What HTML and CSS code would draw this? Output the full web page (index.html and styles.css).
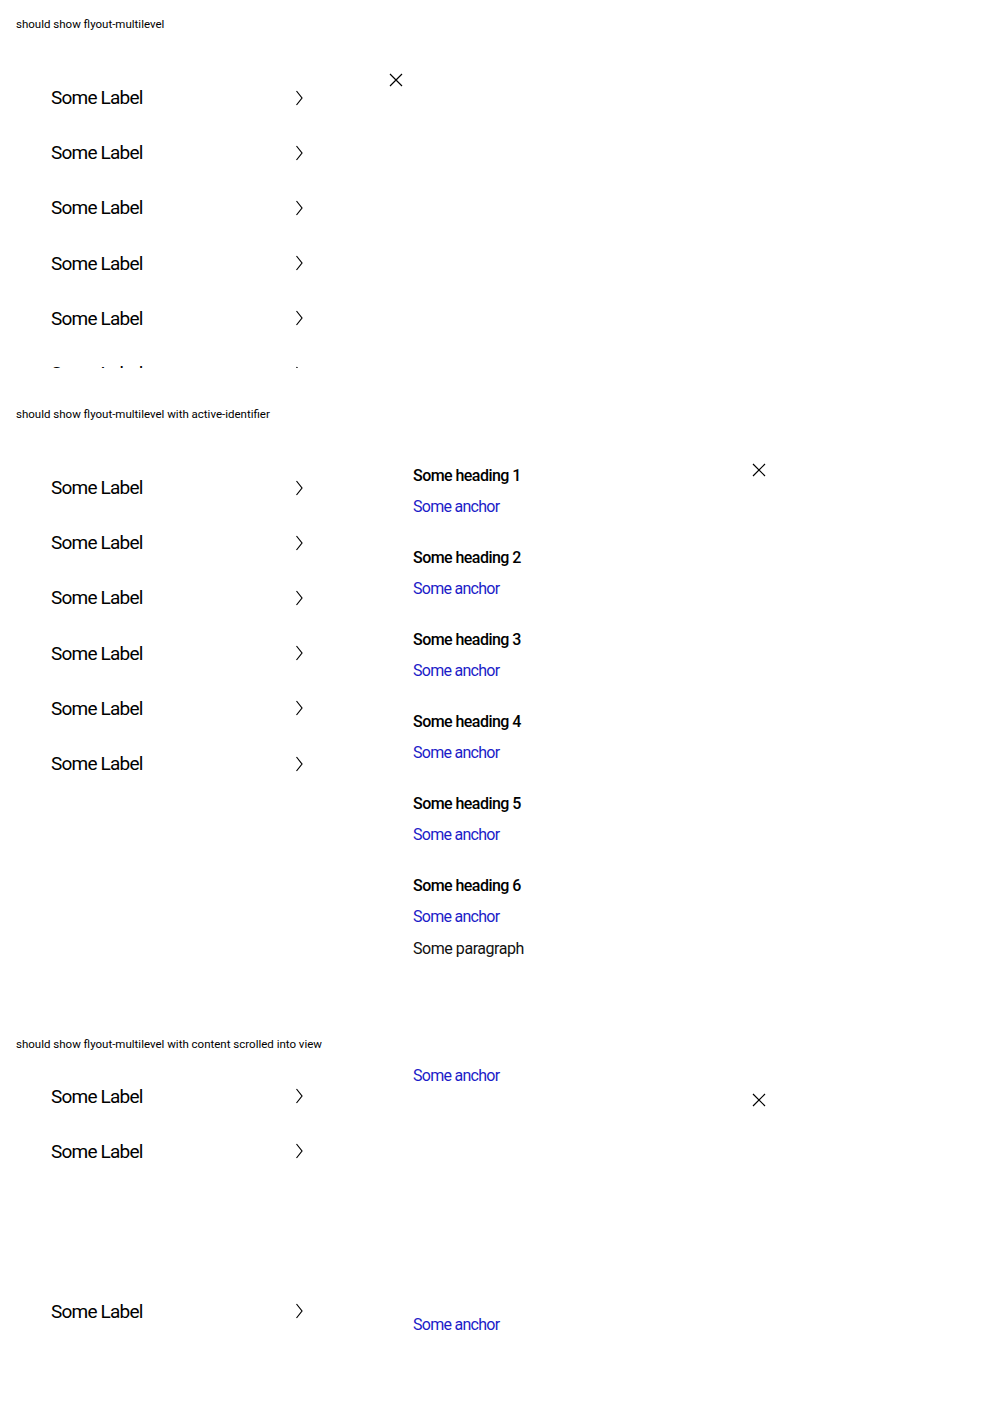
FILE: index.html
```html
<!DOCTYPE html>
<html lang="en">
<head>
<meta charset="utf-8">
<title>Flyout multilevel</title>
<link rel="stylesheet" href="styles.css">
</head>
<body>
<section class="demo demo-1">
  <p class="title">should show flyout-multilevel</p>
  <div class="flyout flyout-closed">
    <button class="close" aria-label="Close"><svg viewBox="0 0 14 14" width="14" height="14"><path d="M1 1L13 13M13 1L1 13" stroke="#000" stroke-width="1.2" fill="none"/></svg></button>
    <nav class="primary">
      <div class="item"><span>Some Label</span><svg class="chev" viewBox="0 0 8 16" width="8" height="16"><path d="M1.5 1L7 8L1.5 15" stroke="#000" stroke-width="1.2" fill="none"/></svg></div>
      <div class="item"><span>Some Label</span><svg class="chev" viewBox="0 0 8 16" width="8" height="16"><path d="M1.5 1L7 8L1.5 15" stroke="#000" stroke-width="1.2" fill="none"/></svg></div>
      <div class="item"><span>Some Label</span><svg class="chev" viewBox="0 0 8 16" width="8" height="16"><path d="M1.5 1L7 8L1.5 15" stroke="#000" stroke-width="1.2" fill="none"/></svg></div>
      <div class="item"><span>Some Label</span><svg class="chev" viewBox="0 0 8 16" width="8" height="16"><path d="M1.5 1L7 8L1.5 15" stroke="#000" stroke-width="1.2" fill="none"/></svg></div>
      <div class="item"><span>Some Label</span><svg class="chev" viewBox="0 0 8 16" width="8" height="16"><path d="M1.5 1L7 8L1.5 15" stroke="#000" stroke-width="1.2" fill="none"/></svg></div>
      <div class="item"><span>Some Label</span><svg class="chev" viewBox="0 0 8 16" width="8" height="16"><path d="M1.5 1L7 8L1.5 15" stroke="#000" stroke-width="1.2" fill="none"/></svg></div>
    </nav>
  </div>
</section>

<section class="demo demo-2">
  <p class="title">should show flyout-multilevel with active-identifier</p>
  <div class="flyout flyout-open">
    <button class="close" aria-label="Close"><svg viewBox="0 0 14 14" width="14" height="14"><path d="M1 1L13 13M13 1L1 13" stroke="#000" stroke-width="1.2" fill="none"/></svg></button>
    <nav class="primary">
      <div class="item"><span>Some Label</span><svg class="chev" viewBox="0 0 8 16" width="8" height="16"><path d="M1.5 1L7 8L1.5 15" stroke="#000" stroke-width="1.2" fill="none"/></svg></div>
      <div class="item"><span>Some Label</span><svg class="chev" viewBox="0 0 8 16" width="8" height="16"><path d="M1.5 1L7 8L1.5 15" stroke="#000" stroke-width="1.2" fill="none"/></svg></div>
      <div class="item"><span>Some Label</span><svg class="chev" viewBox="0 0 8 16" width="8" height="16"><path d="M1.5 1L7 8L1.5 15" stroke="#000" stroke-width="1.2" fill="none"/></svg></div>
      <div class="item"><span>Some Label</span><svg class="chev" viewBox="0 0 8 16" width="8" height="16"><path d="M1.5 1L7 8L1.5 15" stroke="#000" stroke-width="1.2" fill="none"/></svg></div>
      <div class="item"><span>Some Label</span><svg class="chev" viewBox="0 0 8 16" width="8" height="16"><path d="M1.5 1L7 8L1.5 15" stroke="#000" stroke-width="1.2" fill="none"/></svg></div>
      <div class="item"><span>Some Label</span><svg class="chev" viewBox="0 0 8 16" width="8" height="16"><path d="M1.5 1L7 8L1.5 15" stroke="#000" stroke-width="1.2" fill="none"/></svg></div>
    </nav>
    <div class="secondary">
      <div class="group"><h3>Some heading 1</h3><a href="#">Some anchor</a></div>
      <div class="group"><h3>Some heading 2</h3><a href="#">Some anchor</a></div>
      <div class="group"><h3>Some heading 3</h3><a href="#">Some anchor</a></div>
      <div class="group"><h3>Some heading 4</h3><a href="#">Some anchor</a></div>
      <div class="group"><h3>Some heading 5</h3><a href="#">Some anchor</a></div>
      <div class="group"><h3>Some heading 6</h3><a href="#">Some anchor</a><p class="para">Some paragraph</p></div>
    </div>
  </div>
</section>

<section class="demo demo-3">
  <p class="title">should show flyout-multilevel with content scrolled into view</p>
  <div class="flyout flyout-open flyout-scrolled">
    <button class="close" aria-label="Close"><svg viewBox="0 0 14 14" width="14" height="14"><path d="M1 1L13 13M13 1L1 13" stroke="#000" stroke-width="1.2" fill="none"/></svg></button>
    <nav class="primary">
      <div class="item"><span>Some Label</span><svg class="chev" viewBox="0 0 8 16" width="8" height="16"><path d="M1.5 1L7 8L1.5 15" stroke="#000" stroke-width="1.2" fill="none"/></svg></div>
      <div class="item"><span>Some Label</span><svg class="chev" viewBox="0 0 8 16" width="8" height="16"><path d="M1.5 1L7 8L1.5 15" stroke="#000" stroke-width="1.2" fill="none"/></svg></div>
      <div class="spacer"></div>
      <div class="item"><span>Some Label</span><svg class="chev" viewBox="0 0 8 16" width="8" height="16"><path d="M1.5 1L7 8L1.5 15" stroke="#000" stroke-width="1.2" fill="none"/></svg></div>
    </nav>
    <div class="secondary">
      <a href="#">Some anchor</a>
      <a href="#" class="far">Some anchor</a>
    </div>
  </div>
</section>
</body>
</html>
```

FILE: styles.css
```css
html, body {
  margin: 0;
  padding: 0;
  background: #fff;
}
body {
  font-family: Roboto, "Liberation Sans", sans-serif;
  color: #000;
  padding: 0 16px;
}
.demo {
  padding-top: 16px;
}
.demo-1 { height: 374px; }
.demo-2 { height: 614px; }
.title {
  margin: 0 0 15px;
  font-size: 11.5px;
  line-height: 17px;
  color: #000;
}
.flyout {
  position: relative;
  display: flex;
  overflow: hidden;
}
.flyout-closed {
  width: 400px;
  height: 320px;
}
.flyout-open {
  width: 763px;
}
.flyout-scrolled {
  height: 342px;
}
.close {
  position: absolute;
  top: 23px;
  right: -7px;
  width: 34px;
  height: 18px;
  padding: 0;
  border: 0;
  background: none;
  display: flex;
  align-items: center;
  justify-content: flex-start;
}
.close svg { display: block; }
.primary {
  flex: 0 0 auto;
  width: 252px;
  padding: 22px 0 0 35px;
}
.flyout-scrolled .primary {
  padding-top: 0.5px;
}
.item {
  height: 55.2px;
  display: flex;
  align-items: center;
  justify-content: space-between;
  font-size: 19px;
  letter-spacing: -0.8px;
}
.chev {
  display: block;
  margin-right: 0;
}
.spacer {
  height: 105px;
}
.secondary {
  margin-left: 110px;
  padding-top: 27px;
  display: flex;
  flex-direction: column;
}
.group {
  display: flex;
  flex-direction: column;
  padding-bottom: 29px;
}
.group h3 {
  margin: 0;
  font-size: 16px;
  line-height: 22px;
  font-weight: 500;
  letter-spacing: -0.55px;
}
.secondary a {
  margin-top: 9px;
  font-size: 16px;
  line-height: 22px;
  color: #1c1cc8;
  text-decoration: none;
  letter-spacing: -0.72px;
}
.para {
  margin: 10px 0 0;
  font-size: 16px;
  line-height: 22px;
  color: #111;
  letter-spacing: -0.45px;
}
.flyout-scrolled .secondary {
  padding-top: 0;
}
.flyout-scrolled .secondary a {
  margin-top: -3px;
}
.flyout-scrolled .secondary a.far {
  margin-top: 227px;
}
```
